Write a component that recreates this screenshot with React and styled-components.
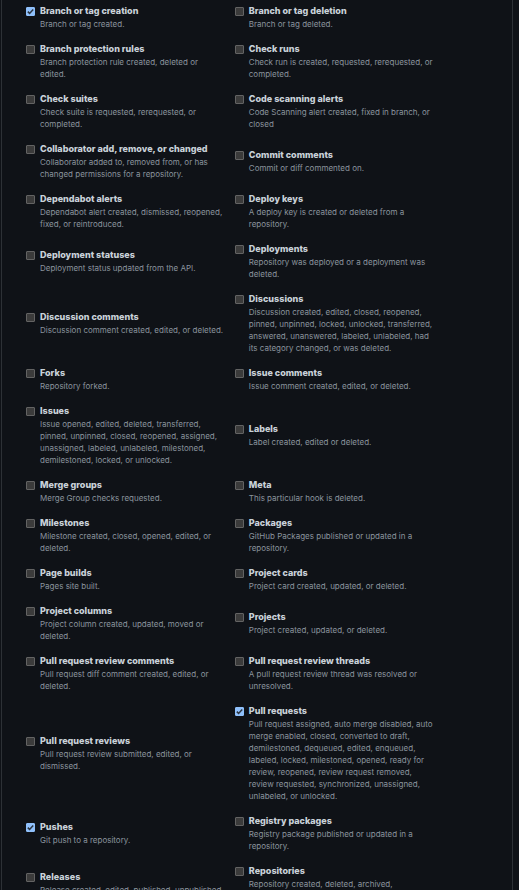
import React from "react";
import styled, { createGlobalStyle } from "styled-components";

const GlobalStyle = createGlobalStyle`
  :root {
    color-scheme: dark;
    scrollbar-width: none;
  }
  body {
    margin: 0;
    background: #0f1217;
    font-family: Inter, "Liberation Sans", sans-serif;
  }
`;

const Panel = styled.main`
  margin: 0 6px 0 1px;
  padding: 3px 22px 0 24px;
  border: solid #2d3136;
  border-width: 0 1px;
`;

const EventGrid = styled.form`
  display: grid;
  grid-template-columns: repeat(2, 45%);
  align-items: center;
`;

const EventItem = styled.div`
  display: grid;
  grid-template-columns: auto 1fr;
  column-gap: 5px;
  padding: 0 9px 11px 0;
`;

const CheckboxFrame = styled.span`
  display: grid;
  width: 9px;
  height: 9px;
  margin-top: 4px;

  > * {
    grid-area: 1 / 1;
  }
`;

const Checkbox = styled.input`
  appearance: none;
  box-sizing: border-box;
  width: 9px;
  height: 9px;
  margin: 0;
  border: 1px solid #636363;
  border-radius: 1px;
  background: #3b3b3b;

  &:checked {
    border-color: #8fc0fb;
    background: #8fc0fb;
  }

  & + svg {
    visibility: hidden;
    pointer-events: none;
  }

  &:checked + svg {
    visibility: visible;
  }
`;

const Title = styled.label`
  color: #c9d1d9;
  font-size: 9px;
  font-weight: 800;
  line-height: 15px;
  white-space: nowrap;
`;

const Description = styled.p`
  grid-column: 2;
  margin: 0;
  color: #8b949e;
  font-size: 8px;
  line-height: 12px;
`;

const events = [
  ["Branch or tag creation", "Branch or tag created.", true],
  ["Branch or tag deletion", "Branch or tag deleted."],
  ["Branch protection rules", "Branch protection rule created, deleted or edited."],
  ["Check runs", "Check run is created, requested, rerequested, or completed."],
  ["Check suites", "Check suite is requested, rerequested, or completed."],
  ["Code scanning alerts", "Code Scanning alert created, fixed in branch, or closed"],
  ["Collaborator add, remove, or changed", "Collaborator added to, removed from, or has changed permissions for a repository."],
  ["Commit comments", "Commit or diff commented on."],
  ["Dependabot alerts", "Dependabot alert created, dismissed, reopened, fixed, or reintroduced."],
  ["Deploy keys", "A deploy key is created or deleted from a repository."],
  ["Deployment statuses", "Deployment status updated from the API."],
  ["Deployments", "Repository was deployed or a deployment was deleted."],
  ["Discussion comments", "Discussion comment created, edited, or deleted."],
  ["Discussions", "Discussion created, edited, closed, reopened, pinned, unpinned, locked, unlocked, transferred, answered, unanswered, labeled, unlabeled, had its category changed, or was deleted."],
  ["Forks", "Repository forked."],
  ["Issue comments", "Issue comment created, edited, or deleted."],
  ["Issues", "Issue opened, edited, deleted, transferred, pinned, unpinned, closed, reopened, assigned, unassigned, labeled, unlabeled, milestoned, demilestoned, locked, or unlocked."],
  ["Labels", "Label created, edited or deleted."],
  ["Merge groups", "Merge Group checks requested."],
  ["Meta", "This particular hook is deleted."],
  ["Milestones", "Milestone created, closed, opened, edited, or deleted."],
  ["Packages", "GitHub Packages published or updated in a repository."],
  ["Page builds", "Pages site built."],
  ["Project cards", "Project card created, updated, or deleted."],
  ["Project columns", "Project column created, updated, moved or deleted."],
  ["Projects", "Project created, updated, or deleted."],
  ["Pull request review comments", "Pull request diff comment created, edited, or deleted."],
  ["Pull request review threads", "A pull request review thread was resolved or unresolved."],
  ["Pull request reviews", "Pull request review submitted, edited, or dismissed."],
  ["Pull requests", "Pull request assigned, auto merge disabled, auto merge enabled, closed, converted to draft, demilestoned, dequeued, edited, enqueued, labeled, locked, milestoned, opened, ready for review, reopened, review request removed, review requested, synchronized, unassigned, unlabeled, or unlocked.", true],
  ["Pushes", "Git push to a repository.", true],
  ["Registry packages", "Registry package published or updated in a repository."],
  ["Releases", "Release created, edited, published, unpublished, or deleted."],
  ["Repositories", "Repository created, deleted, archived, unarchived, publicized, privatized, edited, renamed, or transferred."],
];

function EventOption({ title, description, checked }) {
  const id = title.toLowerCase().replace(/[^a-z]+/g, "-");
  return (
    <EventItem>
      <CheckboxFrame>
        <Checkbox type="checkbox" id={id} defaultChecked={checked} aria-describedby={`${id}-description`} />
        <svg width="9" height="9" viewBox="0 0 9 9" fill="none" aria-hidden="true">
          <path d="M1.8 4.6 3.6 6.4 7.2 2.4" stroke="#2b3440" strokeWidth="1.5" />
        </svg>
      </CheckboxFrame>
      <Title htmlFor={id}>{title}</Title>
      <Description id={`${id}-description`}>{description}</Description>
    </EventItem>
  );
}

export default function App() {
  return (
    <>
      <GlobalStyle />
      <Panel>
        <EventGrid>
          {events.map(([title, description, checked = false]) => (
            <EventOption key={title} title={title} description={description} checked={checked} />
          ))}
        </EventGrid>
      </Panel>
    </>
  );
}
